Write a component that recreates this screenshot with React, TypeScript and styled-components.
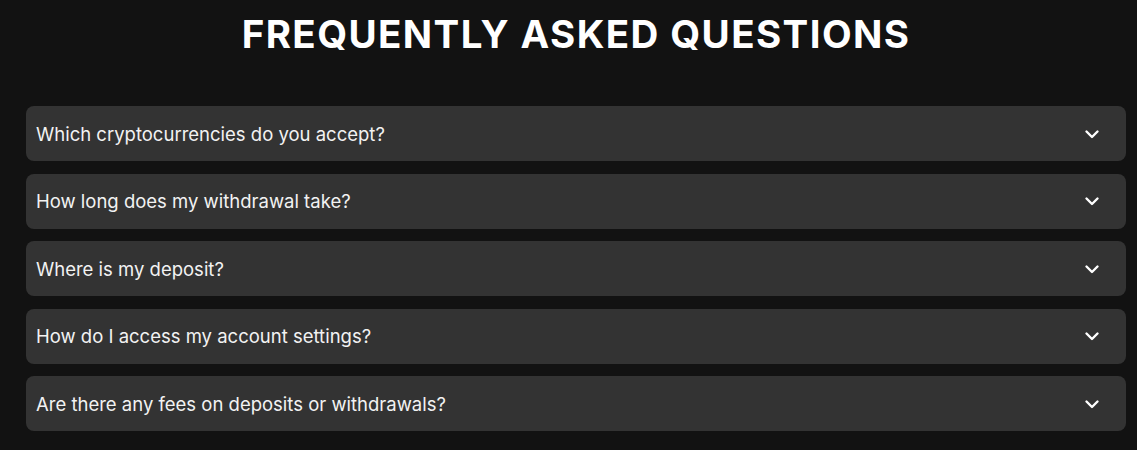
import React from "react";
import styled, { createGlobalStyle } from "styled-components";

const Global = createGlobalStyle`
  html, body { margin: 0; padding: 0; background: #121212; }
  body { font-family: Inter, "Noto Sans", sans-serif; }
`;

const Page = styled.div`
  width: 1137px;
  height: 450px;
  background: #121212;
  box-sizing: border-box;
  padding: 11px 11px 0 26px;
  display: flex;
  flex-direction: column;
`;

const Title = styled.h1`
  margin: 0;
  text-align: center;
  color: #ffffff;
  font-family: Inter, "Noto Sans", sans-serif;
  font-weight: 700;
  font-size: 38.5px;
  line-height: 46px;
  letter-spacing: 1.4px;
`;

const List = styled.div`
  margin-top: 49px;
  display: flex;
  flex-direction: column;
  gap: 12.5px;
`;

const Item = styled.div`
  height: 55px;
  background: #333333;
  border-radius: 8px;
  display: flex;
  align-items: center;
  justify-content: space-between;
  padding: 0 26px 0 10px;
  box-sizing: border-box;
`;

const Question = styled.span`
  color: #f2f2f2;
  font-size: 18.5px;
  font-weight: 400;
`;

const Chevron = () => (
  <svg width="16" height="16" viewBox="0 0 16 16" fill="none">
    <path d="M2.5 5.5 L8 11 L13.5 5.5" stroke="#fff" strokeWidth="2.4" strokeLinecap="round" strokeLinejoin="round" />
  </svg>
);

const questions = [
  "Which cryptocurrencies do you accept?",
  "How long does my withdrawal take?",
  "Where is my deposit?",
  "How do I access my account settings?",
  "Are there any fees on deposits or withdrawals?",
];

export default function App() {
  return (
    <Page>
      <Global />
      <Title>FREQUENTLY ASKED QUESTIONS</Title>
      <List>
        {questions.map((q) => (
          <Item key={q}>
            <Question>{q}</Question>
            <Chevron />
          </Item>
        ))}
      </List>
    </Page>
  );
}
